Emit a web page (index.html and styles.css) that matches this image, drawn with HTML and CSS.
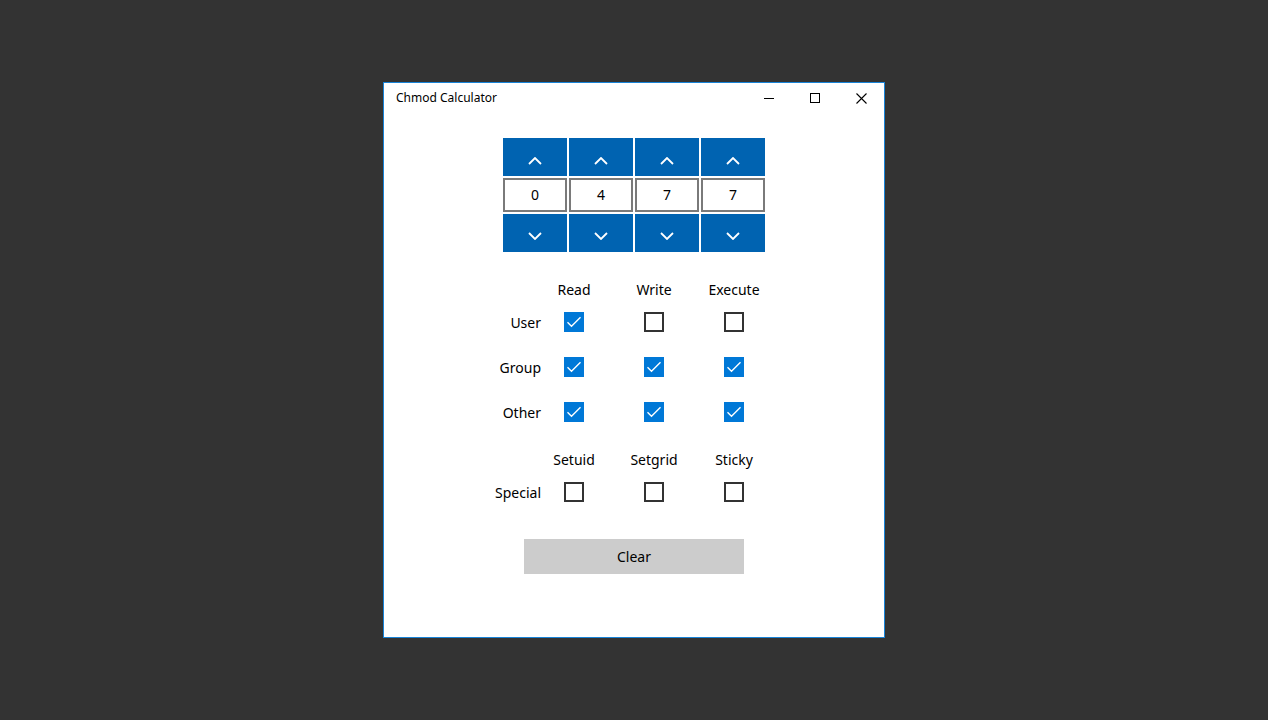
FILE: index.html
```html
<!DOCTYPE html>
<html>
<head>
<meta charset="utf-8">
<title>Chmod Calculator</title>
<link rel="stylesheet" href="styles.css">
</head>
<body>
<div class="window">
  <div class="titlebar">
    <span class="title">Chmod Calculator</span>
    <div class="controls">
      <div class="ctl"><svg width="10" height="10" viewBox="0 0 10 10"><path d="M0 5.5h10" stroke="#000" stroke-width="1"/></svg></div>
      <div class="ctl"><svg width="10" height="10" viewBox="0 0 10 10"><rect x="0.5" y="0.5" width="9" height="9" fill="none" stroke="#000" stroke-width="1"/></svg></div>
      <div class="ctl"><svg width="11" height="11" viewBox="0 0 11 11"><path d="M0.5 0.5l10 10M10.5 0.5l-10 10" stroke="#000" stroke-width="1.1"/></svg></div>
    </div>
  </div>
  <div class="content">
    <div class="digits">
      <button class="arrow up"><svg width="14" height="8" viewBox="0 0 14 8"><path d="M1 7l6-6 6 6" fill="none" stroke="#fff" stroke-width="1.8"/></svg></button>
      <button class="arrow up"><svg width="14" height="8" viewBox="0 0 14 8"><path d="M1 7l6-6 6 6" fill="none" stroke="#fff" stroke-width="1.8"/></svg></button>
      <button class="arrow up"><svg width="14" height="8" viewBox="0 0 14 8"><path d="M1 7l6-6 6 6" fill="none" stroke="#fff" stroke-width="1.8"/></svg></button>
      <button class="arrow up"><svg width="14" height="8" viewBox="0 0 14 8"><path d="M1 7l6-6 6 6" fill="none" stroke="#fff" stroke-width="1.8"/></svg></button>
      <div class="digit">0</div>
      <div class="digit">4</div>
      <div class="digit">7</div>
      <div class="digit">7</div>
      <button class="arrow down"><svg width="14" height="8" viewBox="0 0 14 8"><path d="M1 1l6 6 6-6" fill="none" stroke="#fff" stroke-width="1.8"/></svg></button>
      <button class="arrow down"><svg width="14" height="8" viewBox="0 0 14 8"><path d="M1 1l6 6 6-6" fill="none" stroke="#fff" stroke-width="1.8"/></svg></button>
      <button class="arrow down"><svg width="14" height="8" viewBox="0 0 14 8"><path d="M1 1l6 6 6-6" fill="none" stroke="#fff" stroke-width="1.8"/></svg></button>
      <button class="arrow down"><svg width="14" height="8" viewBox="0 0 14 8"><path d="M1 1l6 6 6-6" fill="none" stroke="#fff" stroke-width="1.8"/></svg></button>
    </div>

    <div class="perms">
      <div></div>
      <div class="cell"><span class="head">Read</span></div>
      <div class="cell"><span class="head">Write</span></div>
      <div class="cell"><span class="head">Execute</span></div>
      <div class="label">User</div>
      <div class="cell"><span class="cb on"><svg width="16" height="16" viewBox="0 0 16 16"><path d="M1.5 8.2l4 4 9-9" fill="none" stroke="#fff" stroke-width="1.4"/></svg></span></div>
      <div class="cell"><span class="cb"></span></div>
      <div class="cell"><span class="cb"></span></div>
      <div class="label">Group</div>
      <div class="cell"><span class="cb on"><svg width="16" height="16" viewBox="0 0 16 16"><path d="M1.5 8.2l4 4 9-9" fill="none" stroke="#fff" stroke-width="1.4"/></svg></span></div>
      <div class="cell"><span class="cb on"><svg width="16" height="16" viewBox="0 0 16 16"><path d="M1.5 8.2l4 4 9-9" fill="none" stroke="#fff" stroke-width="1.4"/></svg></span></div>
      <div class="cell"><span class="cb on"><svg width="16" height="16" viewBox="0 0 16 16"><path d="M1.5 8.2l4 4 9-9" fill="none" stroke="#fff" stroke-width="1.4"/></svg></span></div>
      <div class="label">Other</div>
      <div class="cell"><span class="cb on"><svg width="16" height="16" viewBox="0 0 16 16"><path d="M1.5 8.2l4 4 9-9" fill="none" stroke="#fff" stroke-width="1.4"/></svg></span></div>
      <div class="cell"><span class="cb on"><svg width="16" height="16" viewBox="0 0 16 16"><path d="M1.5 8.2l4 4 9-9" fill="none" stroke="#fff" stroke-width="1.4"/></svg></span></div>
      <div class="cell"><span class="cb on"><svg width="16" height="16" viewBox="0 0 16 16"><path d="M1.5 8.2l4 4 9-9" fill="none" stroke="#fff" stroke-width="1.4"/></svg></span></div>
    </div>

    <div class="perms special">
      <div></div>
      <div class="cell"><span class="head">Setuid</span></div>
      <div class="cell"><span class="head">Setgrid</span></div>
      <div class="cell"><span class="head">Sticky</span></div>
      <div class="label">Special</div>
      <div class="cell"><span class="cb"></span></div>
      <div class="cell"><span class="cb"></span></div>
      <div class="cell"><span class="cb"></span></div>
    </div>

    <button class="clear">Clear</button>
  </div>
</div>
</body>
</html>
```

FILE: styles.css
```css
* { box-sizing: border-box; }
html, body { margin: 0; padding: 0; }
body {
  background: #333333;
  height: 100vh;
  display: flex;
  align-items: center;
  justify-content: center;
  font-family: "Noto Sans", "Open Sans", sans-serif;
  color: #000;
}
.window {
  width: 502px;
  height: 556px;
  margin-top: -1px;
  background: #fff;
  border: 1px solid #1883d7;
  display: flex;
  flex-direction: column;
}
.titlebar {
  height: 31px;
  display: flex;
  align-items: center;
  justify-content: space-between;
}
.title {
  font-size: 12px;
  padding-left: 12px;
  margin-top: -2px;
}
.controls { display: flex; height: 31px; }
.ctl {
  width: 46px;
  height: 31px;
  display: flex;
  align-items: center;
  justify-content: center;
}
.content {
  display: flex;
  flex-direction: column;
  align-items: center;
}
.digits {
  margin-top: 24px;
  display: grid;
  grid-template-columns: repeat(4, 64px);
  grid-template-rows: 38px 34px 38px;
  gap: 2px;
}
.arrow {
  border: none;
  margin: 0;
  padding: 0;
  background: #0063b1;
  display: flex;
  align-items: center;
  justify-content: center;
}
.arrow svg { display: block; }
.arrow.up { padding-top: 8px; }
.arrow.down { padding-top: 6px; }
.digit {
  border: 2px solid #7a7a7a;
  display: flex;
  align-items: center;
  justify-content: center;
  font-size: 14px;
}
.perms {
  align-self: flex-start;
  margin-left: 57px;
  margin-top: 28px;
  display: grid;
  grid-template-columns: 100px 80px 80px 80px;
  grid-template-rows: 20px repeat(3, 45px);
}
.perms.special {
  margin-top: 15px;
  grid-template-rows: 20px 45px;
}
.cell {
  display: flex;
  align-items: center;
  padding-left: 23px;
}
.head {
  width: 20px;
  font-size: 14px;
  line-height: 20px;
  display: flex;
  justify-content: center;
  white-space: nowrap;
}
.label {
  font-size: 14px;
  display: flex;
  align-items: center;
  justify-content: flex-end;
}
.cb {
  width: 20px;
  height: 20px;
  border: 2px solid #333;
  display: block;
}
.cb.on {
  background: #0078d7;
  border-color: #0078d7;
}
.cb svg { display: block; }
.clear {
  margin-top: 24px;
  width: 220px;
  height: 35px;
  border: none;
  background: #cccccc;
  font-family: "Noto Sans", "Open Sans", sans-serif;
  font-size: 14px;
  color: #000;
}
```
